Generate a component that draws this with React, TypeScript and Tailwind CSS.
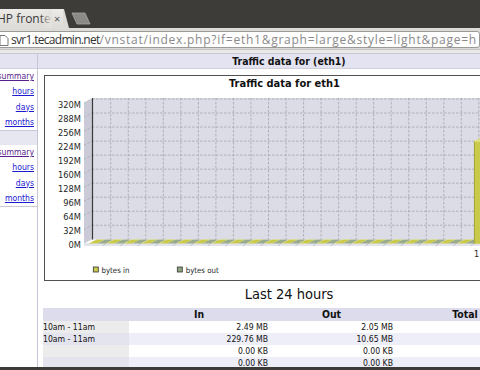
import React from "react";

const X0 = 93.2;
const DX = 17.53;

function Chart() {
  const hLines = Array.from({ length: 10 }, (_, k) => 99 + 14.03 * k);
  const labels = Array.from({ length: 11 }, (_, k) => ({
    y: 99 + 14.03 * k + 8.6,
    t: `${320 - 32 * k}M`,
  }));
  const vLines = Array.from({ length: 24 }, (_, j) => X0 + DX * (j + 1));
  const slots = Array.from({ length: 24 }, (_, j) => X0 + DX * j);
  return (
    <svg width="489" height="204" className="block">
      <g transform="translate(-45,-76)" fontFamily="'DejaVu Sans', Verdana, sans-serif">
        <text x="284.5" y="87" textAnchor="middle" fontWeight="bold" fontSize="11" fill="#111">
          Traffic data for eth1
        </text>
        <rect x="92" y="98" width="440" height="141.5" fill="#dcdce6" />
        <polygon points="84,102 92,98 92,239.5 84,243.5" fill="#cbcbd7" />
        <rect x="84" y="243" width="440" height="3" fill="#e4e4ec" />
        {hLines.map((y, i) => (
          <g key={i}>
            <line x1="92" y1={y} x2="532" y2={y} stroke="#a4a4ae" strokeWidth="0.8" strokeDasharray="2.5 1.5" />
            <line x1="84" y1={y + 4} x2="92" y2={y} stroke="#a4a4ae" strokeWidth="0.8" strokeDasharray="2 2" />
          </g>
        ))}
        {vLines.map((x, i) => (
          <g key={i}>
            <line x1={x} y1="98" x2={x} y2="239" stroke="#a4a4ae" strokeWidth="0.8" strokeDasharray="2.5 1.5" />
            <line x1={x - 8} y1="246" x2={x} y2="239" stroke="#b4b4bc" strokeWidth="0.7" />
          </g>
        ))}
        <line x1="92.5" y1="98" x2="92.5" y2="239.5" stroke="#3a3a3a" strokeWidth="1.2" />
        <line x1="84" y1="102.3" x2="92" y2="98.3" stroke="#f4f4f8" strokeWidth="0.8" />
        {slots.map((x, i) => {
          const fx = x - 4.5;
          return (
            <g key={i}>
              <polygon
                points={`${fx},243.5 ${fx + 8.5},243.5 ${fx + 16.5},239.5 ${fx + 8},239.5`}
                fill="#c9c94b"
              />
              <polygon
                points={`${fx + 8.5},243.5 ${fx + 17},243.5 ${fx + 25},239.5 ${fx + 16.5},239.5`}
                fill="#9aab8b"
              />
            </g>
          );
        })}
        <polygon points="474,141 482.5,141 490.5,137 482,137" fill="#dcdc82" />
        <rect x="474" y="141" width="8.5" height="102.5" fill="#c9c94b" />
        <line x1="474.4" y1="141" x2="474.4" y2="243.5" stroke="#9c9c34" strokeWidth="0.8" />
        <line x1="474" y1="141.3" x2="482.5" y2="141.3" stroke="#eeee9a" strokeWidth="0.7" />
        {labels.map((l, i) => (
          <text key={i} x="81" y={l.y} textAnchor="end" fontSize="9.2" fill="#262626">
            {l.t}
          </text>
        ))}
        <text x="476.5" y="257" textAnchor="middle" fontSize="9" fill="#262626">
          1
        </text>
        <rect x="93.3" y="267" width="5" height="5" fill="#c9c94b" stroke="#333" strokeWidth="0.8" />
        <text x="101.5" y="273" fontSize="7.8" fill="#2a2a2a">
          bytes in
        </text>
        <rect x="177.3" y="267" width="5" height="5" fill="#8ea47e" stroke="#333" strokeWidth="0.8" />
        <text x="185.7" y="273" fontSize="7.8" fill="#2a2a2a">
          bytes out
        </text>
      </g>
    </svg>
  );
}

function SideLinks() {
  return (
    <div className="flex flex-col items-end pr-[3px] text-[8.6px] leading-[15.3px]">
      <a className="underline text-[#5a1f8c]">summary</a>
      <a className="underline text-[#1a1ad0]">hours</a>
      <a className="underline text-[#1a1ad0]">days</a>
      <a className="underline text-[#1a1ad0]">months</a>
    </div>
  );
}

const rows = [
  { label: "10am - 11am", inv: "2.49 MB", out: "2.05 MB", tot: "4.54 MB" },
  { label: "10am - 11am", inv: "229.76 MB", out: "10.65 MB", tot: "240.41 MB" },
  { label: "", inv: "0.00 KB", out: "0.00 KB", tot: "0.00 KB" },
  { label: "", inv: "0.00 KB", out: "0.00 KB", tot: "0.00 KB" },
];

export default function App() {
  return (
    <div className="w-[480px] h-[370px] overflow-hidden flex flex-col bg-white font-['DejaVu_Sans_Condensed','DejaVu_Sans',sans-serif] font-stretch-condensed text-[#111]">
      {/* tab strip */}
      <div className="h-[28px] shrink-0 bg-[#3d3c38] flex items-end font-['Open_Sans',sans-serif] font-stretch-normal">
        <div className="h-[19px] w-[63px] bg-gradient-to-b from-[#ecebe8] to-[#dcdbd7] flex items-center">
          <div className="relative w-[52px] h-full overflow-hidden flex items-center">
            <span className="ml-[-3px] text-[12px] text-[#3a3a3a] whitespace-nowrap">HP frontend</span>
            <div className="absolute right-0 top-0 h-full w-[12px] bg-gradient-to-r from-transparent to-[#e4e3df]" />
          </div>
          <span className="ml-[2px] text-[11px] leading-none text-[#555]">×</span>
        </div>
        <svg width="30" height="19" className="block">
          <polygon points="0,0 1,0 6,19 0,19" fill="#dcdbd7" />
          <polygon points="9,4 22,4 27,15 14,15" fill="#8b8a86" stroke="#a8a7a2" strokeWidth="0.8" />
        </svg>
      </div>
      {/* toolbar */}
      <div className="h-[22px] shrink-0 bg-[#dcdbd7] pt-[3px] border-b border-[#c4c3bf] font-['Open_Sans',sans-serif] font-stretch-normal">
        <div className="h-[17px] ml-[-6px] bg-white border border-[#9a9a96] rounded-[3px] flex items-center">
          <svg width="13" height="12" className="block ml-[2px]">
            <path d="M3 1.5h5l3 3v7H3z" fill="#fff" stroke="#777" strokeWidth="1" />
          </svg>
          <span className="ml-[1px] text-[12px] whitespace-nowrap">
            <span className="text-[#333] tracking-[-0.7px]">svr1.tecadmin.net</span>
            <span className="text-[#8a8a8a] tracking-[0.75px]">/vnstat/index.php?if=eth1&amp;graph=large&amp;style=light&amp;page=h</span>
          </span>
        </div>
      </div>
      {/* page */}
      <div className="flex-1 flex flex-col min-h-0">
        <div className="h-[4px] shrink-0 bg-[#e9e9ea] border-b border-[#c8c8d4]" />
        <div className="flex-1 flex min-h-0">
          {/* sidebar */}
          <div className="w-[38px] shrink-0 border-r border-[#c6c6d6] flex flex-col">
            <div className="h-[15px] bg-[#e3e3f1] border-b border-[#d0d0dc]" />
            <div className="h-[62px] border-b border-[#c8c8d6]">
              <SideLinks />
            </div>
            <div className="h-[14px] bg-[#e7e7f2]" />
            <div className="h-[62px] border-b border-[#c8c8d6]">
              <SideLinks />
            </div>
          </div>
          {/* main */}
          <div className="w-[502px] shrink-0 flex flex-col">
            <div className="h-[15px] bg-[#e3e3f1] border-b border-[#d0d0dc] text-center font-bold text-[10.4px] leading-[14px]">
              Traffic data for (eth1)
            </div>
            <div className="mt-[6px] ml-[6px] w-[491px] h-[206px] border border-[#505050] bg-white">
              <Chart />
            </div>
            <div className="h-[27px] text-center text-[14.5px] leading-[27px]">Last 24 hours</div>
            <div className="ml-[5px] flex flex-col text-[8.6px]">
              <div className="flex h-[13px] bg-[#dcdcec] font-bold text-[10.4px] leading-[13px]">
                <div className="w-[86px]" />
                <div className="w-[140px] text-center">In</div>
                <div className="w-[125px] text-center">Out</div>
                <div className="w-[142px] text-center">Total</div>
              </div>
              {rows.map((r, i) => (
                <div
                  key={i}
                  className={
                    i % 2 === 0
                      ? "flex h-[12px] leading-[12px] bg-white"
                      : "flex h-[12px] leading-[12px] bg-[#eeeef8]"
                  }
                >
                  <div className={i % 2 === 0 ? "w-[86px] bg-[#ececec]" : "w-[86px] bg-[#e4e4ee]"}>{r.label}</div>
                  <div className="w-[140px] text-right pr-[1px]">{r.inv}</div>
                  <div className="w-[125px] text-right pr-[1px]">{r.out}</div>
                  <div className="w-[142px] text-right pr-[3px]">{r.tot}</div>
                </div>
              ))}
            </div>
          </div>
        </div>
      </div>
      <div className="h-[3px] shrink-0 bg-[#3c3b37]" />
    </div>
  );
}
